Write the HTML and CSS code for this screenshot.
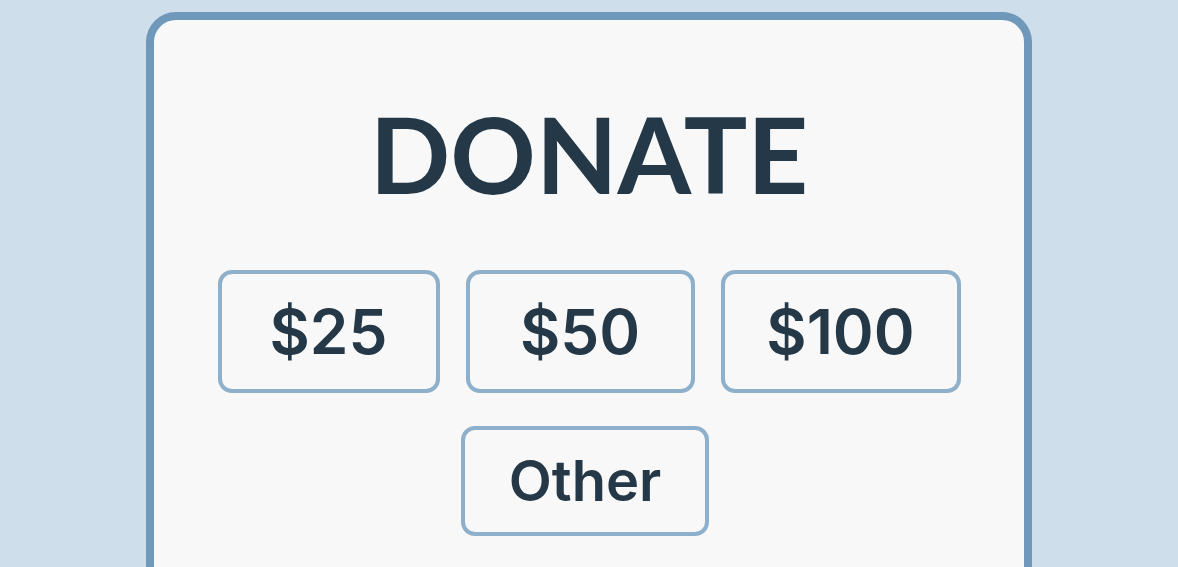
FILE: index.html
```html
<!DOCTYPE html>
<html lang="en">
<head>
    <meta charset="UTF-8">
    <meta name="viewport" content="width=device-width, initial-scale=1.0">
    <title>Donate</title>
    <link rel="stylesheet" href="styles.css">
</head>
<body>
    <div class="card">
        <h1>DONATE</h1>
        <div class="amounts">
            <button class="amount amount-25">$25</button>
            <button class="amount amount-50">$50</button>
            <button class="amount amount-100">$100</button>
        </div>
        <button class="amount other">Other</button>
    </div>
</body>
</html>
```

FILE: styles.css
```css
body {
    margin: 0;
    background-color: #cedeea;
    font-family: Lato, "Open Sans", sans-serif;
    height: 567px;
    overflow: hidden;
}
.card {
    width: 870px;
    height: 600px;
    margin: 12px auto 0;
    background-color: #f8f8f8;
    border: 8px solid #7098ba;
    border-radius: 30px;
    display: flex;
    flex-direction: column;
    align-items: center;
    padding-top: 80px;
    box-sizing: content-box;
}
h1 {
    margin: 0;
    font-size: 106px;
    line-height: 1;
    font-weight: 700;
    color: #243847;
}
.amounts {
    display: flex;
    gap: 26px;
    margin-top: 64px;
}
.amount {
    height: 123px;
    background-color: #f8f8f8;
    border: 4px solid #8fb0cb;
    border-radius: 14px;
    font-family: Inter, Lato, sans-serif;
    font-size: 62px;
    font-weight: 600;
    color: #243847;
    padding: 0;
}
.amount-25 {
    width: 222px;
}
.amount-50 {
    width: 229px;
}
.amount-100 {
    width: 240px;
}
.other {
    width: 248px;
    height: 110px;
    margin-top: 33px;
    margin-right: 8px;
    font-size: 56px;
}
```
